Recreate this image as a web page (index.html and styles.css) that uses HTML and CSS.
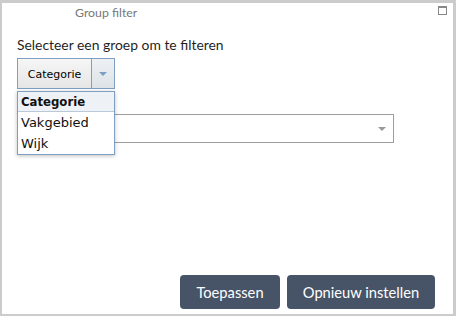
FILE: index.html
```html
<!DOCTYPE html>
<html lang="nl">
<head>
    <meta charset="UTF-8">
    <title>Group filter</title>
    <link rel="stylesheet" href="styles.css">
</head>
<body>
    <div class="panel">
        <div class="panel-head">
            <span class="panel-title">Group filter</span>
            <span class="max-icon"></span>
        </div>

        <div class="panel-body">
            <p class="intro">Selecteer een groep om te filteren</p>

            <div class="group-pick">
                <div class="drop-btn">
                    <span class="drop-label">Categorie</span>
                    <span class="drop-arrow"><i class="tri tri-blue"></i></span>
                </div>
                <ul class="drop-menu">
                    <li class="menu-head">Categorie</li>
                    <li>Vakgebied</li>
                    <li>Wijk</li>
                </ul>
            </div>

            <div class="value-select">
                <i class="tri tri-grey"></i>
            </div>
        </div>

        <div class="actions">
            <button class="action-btn apply">Toepassen</button>
            <button class="action-btn reset">Opnieuw instellen</button>
        </div>
    </div>
</body>
</html>
```

FILE: styles.css
```css
body {
    margin: 0;
    font-family: Lato, "Open Sans", sans-serif;
    background-color: #fff;
}
.panel {
    width: 456px;
    height: 316px;
    box-sizing: border-box;
    border: 2px solid #cccccc;
    border-top-width: 3px;
    border-right-width: 3px;
    display: flex;
    flex-direction: column;
    background-color: #fff;
}
.panel-head {
    height: 18px;
    display: flex;
    align-items: center;
    justify-content: space-between;
    padding: 0 6px 0 73px;
}
.panel-title {
    font-size: 12.3px;
    color: #777;
}
.max-icon {
    width: 7px;
    height: 6px;
    border: 1px solid #888;
    border-top-width: 2px;
    margin-top: -3px;
}
.panel-body {
    flex: 1;
    padding: 0 0 0 15px;
}
.intro {
    margin: 15px 0 4px;
    font-size: 13.9px;
    line-height: 18px;
    color: #1f1f1f;
}
.group-pick {
    position: relative;
    width: 98px;
}
.drop-btn {
    display: flex;
    height: 31px;
    box-sizing: border-box;
    border: 1px solid #7e9fc2;
    background: linear-gradient(#f6f6f6, #e6e6e6);
    font-family: "DejaVu Sans", Verdana, sans-serif;
    font-size: 11px;
    color: #000;
}
.drop-label {
    flex: 1;
    display: flex;
    align-items: center;
    justify-content: center;
    padding-top: 1px;
}
.drop-arrow {
    width: 22px;
    border-left: 1px solid #7e9fc2;
    background: linear-gradient(#eef1f4, #dde3e8);
    display: flex;
    align-items: center;
    justify-content: center;
}
.tri {
    width: 0;
    height: 0;
    border-left: 4px solid transparent;
    border-right: 4px solid transparent;
    border-top: 4px solid #999;
}
.tri-blue {
    border-top-color: #7b9ec2;
}
.drop-menu {
    position: absolute;
    top: 33px;
    left: 0;
    width: 98px;
    box-sizing: border-box;
    margin: 0;
    padding: 0;
    list-style: none;
    border: 1px solid #7e9fc2;
    background-color: #fff;
    box-shadow: 0 1px 4px rgba(0,0,0,0.25);
    font-family: "DejaVu Sans", Verdana, sans-serif;
    font-size: 13px;
    color: #111;
    z-index: 2;
}
.drop-menu li {
    height: 21px;
    line-height: 21px;
    padding-left: 3px;
}
.drop-menu .menu-head {
    height: 19px;
    line-height: 19px;
    font-family: "DejaVu Sans Condensed", "DejaVu Sans", sans-serif;
    font-weight: bold;
    background-color: #eef1f5;
    border-bottom: 1px solid #b9c9da;
}
.value-select {
    margin-top: 25px;
    width: 377px;
    height: 29px;
    box-sizing: border-box;
    border: 1px solid #9e9e9e;
    display: flex;
    align-items: center;
    justify-content: flex-end;
    padding-right: 7px;
}
.actions {
    display: flex;
    justify-content: flex-end;
    gap: 7px;
    padding: 0 18px 5px 0;
}
.action-btn {
    height: 34px;
    border: none;
    border-radius: 4px;
    background-color: #475467;
    color: #fff;
    font-family: Lato, "Open Sans", sans-serif;
    font-size: 14.7px;
    cursor: pointer;
}
.apply {
    width: 100px;
}
.reset {
    width: 148px;
}
```
